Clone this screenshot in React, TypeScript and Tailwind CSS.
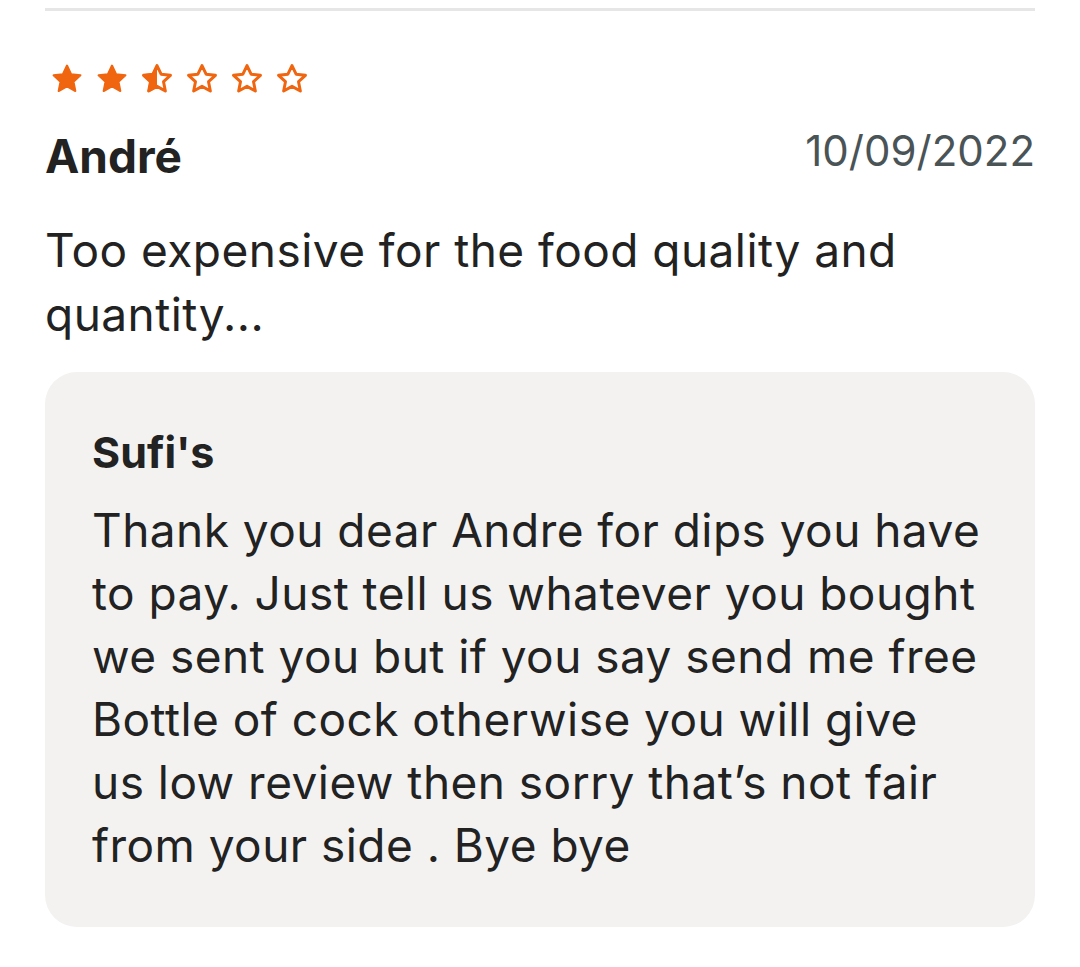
import React from 'react'

const ORANGE = '#f0650f'

function Star({ fill }: { fill: 'full' | 'half' | 'empty' }) {
  const d = 'M12 2.5l2.9 6.1 6.6.8-4.9 4.5 1.3 6.6L12 17.2l-5.9 3.3 1.3-6.6-4.9-4.5 6.6-.8z'
  return (
    <svg width="34" height="34" viewBox="0 0 24 24">
      <defs>
        <clipPath id="half-left">
          <rect x="0" y="0" width="12" height="24" />
        </clipPath>
      </defs>
      {fill === 'full' && <path d={d} fill={ORANGE} stroke={ORANGE} strokeWidth="1.4" strokeLinejoin="round" />}
      {fill === 'half' && (
        <>
          <path d={d} fill="none" stroke={ORANGE} strokeWidth="2.1" strokeLinejoin="round" />
          <path d={d} fill={ORANGE} stroke={ORANGE} strokeWidth="1.4" strokeLinejoin="round" clipPath="url(#half-left)" />
        </>
      )}
      {fill === 'empty' && <path d={d} fill="none" stroke={ORANGE} strokeWidth="2.1" strokeLinejoin="round" />}
    </svg>
  )
}

export default function App() {
  const stars: ('full' | 'half' | 'empty')[] = ['full', 'full', 'half', 'empty', 'empty', 'empty']

  return (
    <div className="min-h-screen bg-white px-[45px] text-[#222222]" style={{ fontFamily: 'Inter, "Noto Sans", sans-serif' }}>
      <div className="h-[3px] bg-[#e6e6e6] mt-[8px]" />

      {/* rating */}
      <div className="flex gap-[11px] mt-[51px] ml-[5px]">
        {stars.map((s, i) => (
          <Star key={i} fill={s} />
        ))}
      </div>

      {/* reviewer */}
      <div className="flex items-start justify-between mt-[34px]">
        <span className="text-[46px] font-bold leading-[52px]">André</span>
        <span className="text-[42px] leading-[42px] text-[#4a5457]">10/09/2022</span>
      </div>

      <p className="mt-[36px] text-[46px] leading-[64px] tracking-[0.01em]">
        Too expensive for the food quality and
        <br />
        quantity...
      </p>

      {/* restaurant reply */}
      <div className="mt-[26px] rounded-[32px] bg-[#f3f2f1] px-[47px] pt-[54px] pb-[50px]">
        <div className="text-[43px] font-bold leading-[52px]">Sufi's</div>
        <p className="mt-[21px] text-[46px] leading-[63px] tracking-[0.01em]">
          Thank you dear Andre for dips you have
          <br />
          to pay. Just tell us whatever you bought
          <br />
          we sent you but if you say send me free
          <br />
          Bottle of cock otherwise you will give
          <br />
          us low review then sorry that’s not fair
          <br />
          from your side . Bye bye
        </p>
      </div>
    </div>
  )
}
